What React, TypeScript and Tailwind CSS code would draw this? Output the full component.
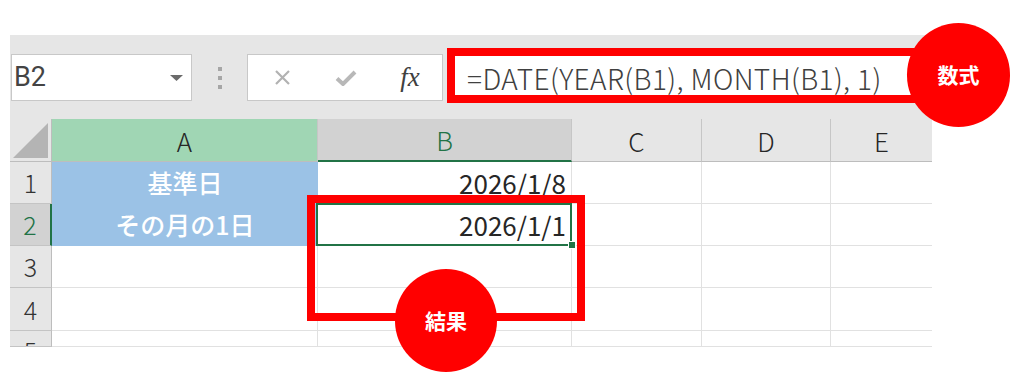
import React from 'react';

function RowHeader({ n, active, clip }: { n: number; active?: boolean; clip?: boolean }) {
  const base = clip
    ? 'h-full overflow-hidden flex items-start justify-center pt-[7px]'
    : 'h-full flex items-center justify-center';
  return (
    <div
      className={
        active
          ? `${base} bg-[#d2d2d2] text-[#217346] border-r-2 border-r-[#217346] border-b border-b-[#c4c4c4]`
          : `${base} bg-[#e6e6e6] text-[#333] border-r border-r-[#bdbdbd] border-b border-b-[#c4c4c4]`
      }
    >
      <span className="text-[25px] font-light leading-none">{n}</span>
    </div>
  );
}

function Cell({ children, className = '' }: { children?: React.ReactNode; className?: string }) {
  return <div className={`h-full border-r border-b border-[#e1e1e1] ${className}`}>{children}</div>;
}

export default function App() {
  return (
    <div className="relative w-[1024px] h-[392px] overflow-hidden bg-white font-['Noto_Sans_CJK_JP',sans-serif]">
      <div className="ml-[10px] mt-[35px] w-[922px]">
        {/* formula bar */}
        <div className="h-[84px] bg-[#e6e6e6] flex items-start pt-[19px]">
          <div className="ml-px w-[181px] h-[47px] bg-white border border-[#c8c8c8] flex items-center pl-[2px] pr-[8px]">
            <span className="font-['Roboto',sans-serif] text-[27px] text-[#444] leading-none">B2</span>
            <svg className="ml-auto" width="13" height="6" viewBox="0 0 13 6">
              <polygon points="0,0 13,0 6.5,6" fill="#6b6b6b" />
            </svg>
          </div>
          <div className="w-[55px] h-[47px] flex flex-col items-center justify-center gap-[5px]">
            <div className="w-[4px] h-[4px] bg-[#a6a6a6]" />
            <div className="w-[4px] h-[4px] bg-[#a6a6a6]" />
            <div className="w-[4px] h-[4px] bg-[#a6a6a6]" />
          </div>
          <div className="w-[196px] h-[47px] bg-white border border-[#c8c8c8] flex items-center">
            <div className="w-[66px] flex justify-center pl-[2px]">
              <svg width="15" height="15" viewBox="0 0 15 15">
                <path d="M1 1 L14 14 M14 1 L1 14" stroke="#b2b2b2" strokeWidth="2.2" />
              </svg>
            </div>
            <div className="w-[64px] flex justify-center">
              <svg width="22" height="16" viewBox="0 0 22 16">
                <path d="M2 8.5 L8 14 L20 2" stroke="#b8b8b8" strokeWidth="4" fill="none" />
              </svg>
            </div>
            <div className="w-[64px] flex justify-center">
              <span className="font-['Liberation_Serif',serif] italic text-[27px] text-[#404040] leading-none">fx</span>
            </div>
          </div>
          <div className="ml-[8px] w-[472px] h-[47px] bg-white border border-[#c8c8c8] flex items-center pl-[15px]">
            <span className="text-[28px] font-light tracking-[0.4px] text-[#404040] leading-none whitespace-nowrap">
              =DATE(YEAR(B1), MONTH(B1), 1)
            </span>
          </div>
        </div>

        {/* sheet */}
        <div className="grid grid-cols-[42px_266px_254px_130px_129px_101px] grid-rows-[43px_42px_42px_42px_43px_16px] overflow-hidden">
          {/* header */}
          <div className="bg-[#e6e6e6] border-r border-b border-[#bdbdbd] flex items-end justify-end pr-[3px] pb-[3px]">
            <svg width="35" height="35" viewBox="0 0 35 35">
              <polygon points="35,0 35,35 0,35" fill="#b4b4b4" />
            </svg>
          </div>
          <div className="bg-[#a0d6b4] border-r border-[#c6c6c6] border-b border-b-[#bdbdbd] flex items-center justify-center text-[26px] font-light text-[#262626]">A</div>
          <div className="bg-[#d2d2d2] border-r border-[#c6c6c6] border-b-2 border-b-[#217346] flex items-center justify-center text-[26px] font-light text-[#217346]">B</div>
          <div className="bg-[#e6e6e6] border-r border-[#c6c6c6] border-b border-b-[#bdbdbd] flex items-center justify-center text-[26px] font-light text-[#262626]">C</div>
          <div className="bg-[#e6e6e6] border-r border-[#c6c6c6] border-b border-b-[#bdbdbd] flex items-center justify-center text-[26px] font-light text-[#262626]">D</div>
          <div className="bg-[#e6e6e6] border-b border-b-[#bdbdbd] flex items-center justify-center text-[26px] font-light text-[#262626]">E</div>

          {/* row 1 */}
          <RowHeader n={1} />
          <div className="bg-[#9bc2e6] flex items-center justify-center text-[25px] font-medium text-white">基準日</div>
          <Cell className="flex items-center justify-end pr-[5px] text-[26px] text-[#262626]">2026/1/8</Cell>
          <Cell />
          <Cell />
          <Cell className="border-r-0" />

          {/* row 2 */}
          <RowHeader n={2} active />
          <div className="bg-[#9bc2e6] flex items-center justify-center text-[25px] font-medium text-white">その月の1日</div>
          <div className="relative h-full border-r border-b border-[#e1e1e1] flex items-center justify-end pr-[5px] text-[26px] text-[#262626]">
            2026/1/1
            <div className="absolute -left-[2px] -top-px right-[-1px] bottom-[-1px] border-2 border-[#217346]" />
            <div className="absolute right-[-5px] bottom-[-4px] w-[8px] h-[8px] bg-[#217346] border border-white" />
          </div>
          <Cell />
          <Cell />
          <Cell className="border-r-0" />

          {/* rows 3-5 */}
          {[3, 4, 5].map((n) => (
            <React.Fragment key={n}>
              <RowHeader n={n} clip={n === 5} />
              <Cell />
              <Cell />
              <Cell />
              <Cell />
              <Cell className="border-r-0" />
            </React.Fragment>
          ))}
        </div>
      </div>

      {/* annotations */}
      <div className="absolute left-[447px] top-[48px] w-[490px] h-[55px] border-[8px] border-[#ff0000]" />
      <div className="absolute left-[907px] top-[23px] w-[103px] h-[104px] rounded-full bg-[#ff0000] flex items-center justify-center">
        <span className="text-[21px] font-bold text-white">数式</span>
      </div>
      <div className="absolute left-[307px] top-[195px] w-[278px] h-[126px] border-[8px] border-[#ff0000]" />
      <div className="absolute left-[395px] top-[269px] w-[102px] h-[103px] rounded-full bg-[#ff0000] flex items-center justify-center">
        <span className="text-[21px] font-bold text-white">結果</span>
      </div>
    </div>
  );
}
